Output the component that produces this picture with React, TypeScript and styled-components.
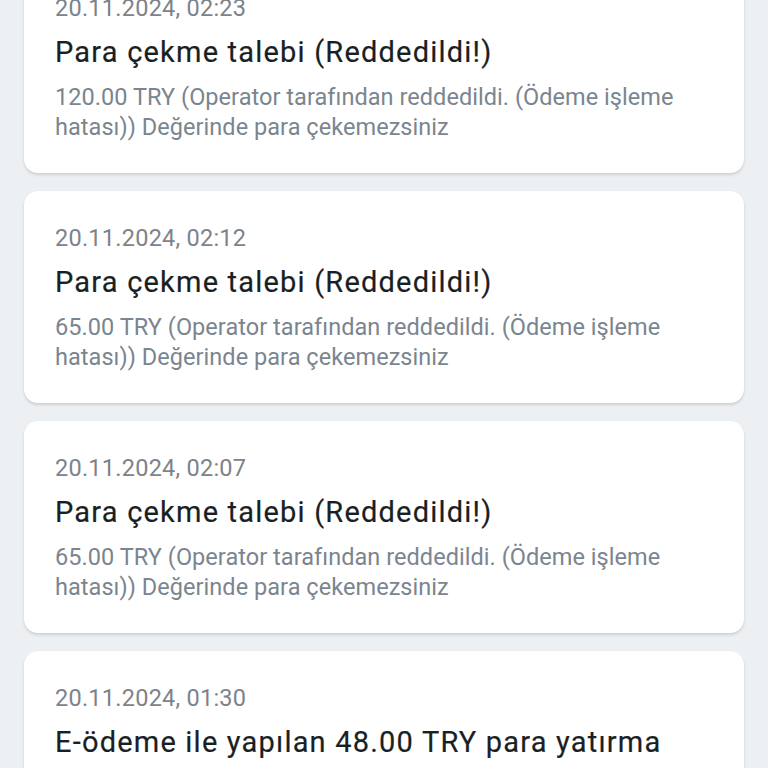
import React from 'react';
import styled, { createGlobalStyle } from 'styled-components';

const GlobalStyle = createGlobalStyle`
  html, body {
    margin: 0;
    padding: 0;
    background-color: #edf0f3;
    font-family: Roboto, "Noto Sans", sans-serif;
    overflow: hidden;
  }
`;

const Page = styled.main`
  height: 768px;
  overflow: hidden;
  background-color: #edf0f3;
`;

const NotificationList = styled.div`
  display: flex;
  flex-direction: column;
  gap: 18px;
  padding: 0 24px;
  margin-top: -39px;
`;

const Card = styled.div`
  background-color: #fff;
  border-radius: 14px;
  padding: 32px 31px 31px;
  box-shadow: 0 2px 3px rgba(0, 0, 0, 0.13), 0 0 1px rgba(0, 0, 0, 0.06);
`;

const DateText = styled.div`
  font-size: 23.5px;
  line-height: 30px;
  letter-spacing: 0.25px;
  color: #7d8389;
`;

const Title = styled.div`
  margin-top: 10px;
  font-size: 29px;
  font-weight: 400;
  line-height: 38px;
  letter-spacing: 1.2px;
  color: #1a1f24;
  -webkit-text-stroke: 0.2px #1a1f24;
`;

const Body = styled.div`
  margin-top: 11px;
  font-size: 23.5px;
  line-height: 30px;
  letter-spacing: 0.05px;
  color: #7a858f;
`;

type Notice = {
  date: string;
  title: string;
  body?: string;
};

const notices: Notice[] = [
  {
    date: '20.11.2024, 02:23',
    title: 'Para çekme talebi (Reddedildi!)',
    body: '120.00 TRY (Operator tarafından reddedildi. (Ödeme işleme hatası)) Değerinde para çekemezsiniz',
  },
  {
    date: '20.11.2024, 02:12',
    title: 'Para çekme talebi (Reddedildi!)',
    body: '65.00 TRY (Operator tarafından reddedildi. (Ödeme işleme hatası)) Değerinde para çekemezsiniz',
  },
  {
    date: '20.11.2024, 02:07',
    title: 'Para çekme talebi (Reddedildi!)',
    body: '65.00 TRY (Operator tarafından reddedildi. (Ödeme işleme hatası)) Değerinde para çekemezsiniz',
  },
  {
    date: '20.11.2024, 01:30',
    title: 'E-ödeme ile yapılan 48.00 TRY para yatırma işlemi başarılı',
    body: 'Hesabınıza 48.00 TRY yatırıldı',
  },
];

const App: React.FC = () => {
  return (
    <Page>
      <GlobalStyle />
      <NotificationList>
        {notices.map((n, i) => (
          <Card key={i}>
            <DateText>{n.date}</DateText>
            <Title>{n.title}</Title>
            {n.body && <Body>{n.body}</Body>}
          </Card>
        ))}
      </NotificationList>
    </Page>
  );
};

export default App;
